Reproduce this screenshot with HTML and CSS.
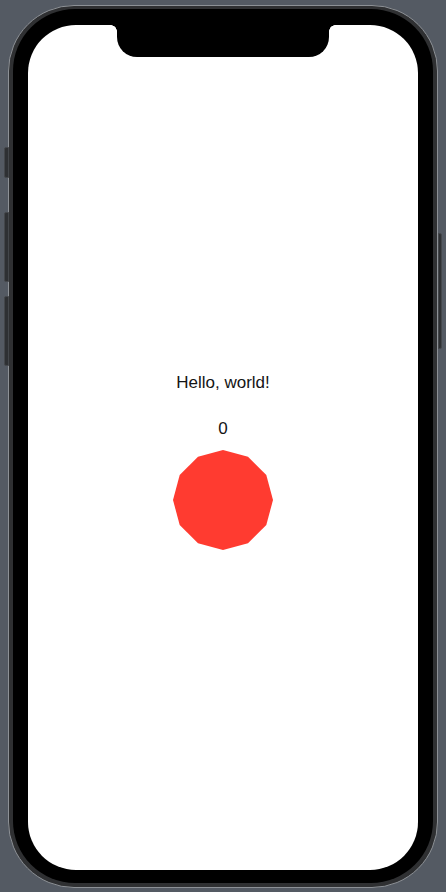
FILE: index.html
```html
<!DOCTYPE html>
<html lang="en">
<head>
<meta charset="utf-8">
<title>Hello, world!</title>
<link rel="stylesheet" href="styles.css">
</head>
<body>
<div class="stage">
  <div class="device">
    <span class="btn btn-action"></span>
    <span class="btn btn-vol-up"></span>
    <span class="btn btn-vol-down"></span>
    <span class="btn btn-power"></span>
    <div class="bezel">
      <div class="notch"></div>
      <main class="screen">
        <p class="greeting">Hello, world!</p>
        <p class="counter">0</p>
        <svg class="shape" width="100" height="100" viewBox="0 0 100 100" aria-hidden="true">
          <polygon fill="#ff3b30" points="50,0 75,6.7 93.3,25 100,50 93.3,75 75,93.3 50,100 25,93.3 6.7,75 0,50 6.7,25 25,6.7"/>
        </svg>
      </main>
    </div>
  </div>
</div>
</body>
</html>
```
FILE: styles.css
```css
html, body {
  margin: 0;
  padding: 0;
  height: 100%;
}
body {
  background: #545a63;
  font-family: "Liberation Sans", Arial, sans-serif;
}
.stage {
  padding: 5px 8px 4px 8px;
  box-sizing: border-box;
  height: 892px;
  display: flex;
}
.device {
  position: relative;
  flex: 1;
  display: flex;
  border: 1px solid #8d9196;
  border-radius: 66px;
  background: #2f3032;
  padding: 3px 4px 4px 4px;
}
.btn {
  position: absolute;
  background: #2e3033;
  border: 1px solid #44474b;
  box-sizing: border-box;
}
.btn-action { left: -5px; top: 141px; width: 5px; height: 31px; border-radius: 2px 0 0 2px; }
.btn-vol-up { left: -5px; top: 206px; width: 5px; height: 70px; border-radius: 2px 0 0 2px; }
.btn-vol-down { left: -5px; top: 290px; width: 5px; height: 70px; border-radius: 2px 0 0 2px; }
.btn-power { right: -5px; top: 227px; width: 4px; height: 116px; border-radius: 0 2px 2px 0; }
.bezel {
  position: relative;
  flex: 1;
  display: flex;
  background: #000;
  border-radius: 62px;
  padding: 16px 15px 13px 15px;
}
.notch {
  position: absolute;
  left: 104px;
  top: 16px;
  width: 212px;
  height: 32px;
  background: #000;
  border-radius: 0 0 20px 20px;
  z-index: 2;
}
.notch::before,
.notch::after {
  content: "";
  position: absolute;
  top: 0;
  width: 6px;
  height: 6px;
}
.notch::before {
  left: -6px;
  background: radial-gradient(circle at 0 100%, transparent 5.5px, #000 6px);
}
.notch::after {
  right: -6px;
  background: radial-gradient(circle at 100% 100%, transparent 5.5px, #000 6px);
}
.screen {
  flex: 1;
  background: #fff;
  border-radius: 48px;
  display: flex;
  flex-direction: column;
  align-items: center;
  padding-top: 348px;
  overflow: hidden;
}
.greeting,
.counter {
  margin: 0;
  font-size: 17px;
  line-height: 20px;
  color: #141414;
}
.counter {
  margin-top: 26px;
}
.shape {
  display: block;
  margin-top: 11px;
}
```
